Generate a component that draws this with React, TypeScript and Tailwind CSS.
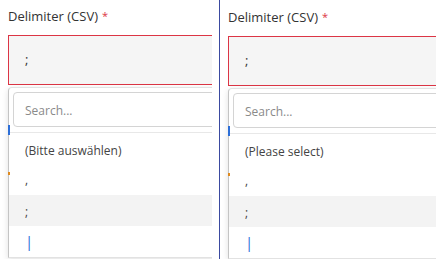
import React from 'react';

interface PanelProps {
  placeholder: string;
  offset?: boolean;
}

function Panel({ placeholder, offset }: PanelProps) {
  return (
    <div className={`relative h-full overflow-hidden pl-2 ${offset ? 'pt-px' : ''}`}>
      <div className="w-[280px]">
        <div className="flex h-[35px] items-center pb-[3px] text-[13px] leading-[18px] text-[#333]">
          <span>Delimiter (CSV)</span>
          <span className="ml-1 text-[11px] text-[#dc3545]">*</span>
        </div>
        <div className="flex h-[50px] items-center border border-[#dc3545] bg-[#f5f5f5] pl-4 text-[13px] text-[#333]">
          ;
        </div>
        <div className="relative mt-[2px] rounded-t-[4px] border border-[#e2e2e2] border-l-[#c4c4c4] bg-white shadow-[0_2px_6px_rgba(0,0,0,0.12)]">
          <span className="absolute -left-px top-[37px] h-[10px] w-[2px] bg-[#2d6fd8]" />
          <span className="absolute -left-px top-[84px] h-[3px] w-[2px] bg-[#e08a1e]" />
          <div className="p-[4px] pb-[5px]">
            <div className="flex h-[35px] items-center rounded-[4px] border border-[#d4d4d4] pl-[11px] pt-[3px] text-[12px] text-[#8a8a8a]">
              Search...
            </div>
          </div>
          <div className="border-t border-[#e8e8e8]">
            <div className="flex h-[31px] items-center pl-4 pt-[4px] text-[12px] text-[#444]">
              {placeholder}
            </div>
            <div className="flex h-[31px] items-center pl-4 text-[12px] text-[#444]">,</div>
            <div className="flex h-[31px] items-center bg-[#f3f3f3] pl-4 pt-[2px] text-[12px] text-[#444]">;</div>
            <div className="flex h-[31px] items-center pl-4 text-[15px] text-[#2d6fd8]">|</div>
          </div>
        </div>
      </div>
    </div>
  );
}

export default function App() {
  return (
    <div
      className="flex h-[259px] w-[441px] overflow-hidden bg-white"
      style={{ fontFamily: '"Open Sans", "Noto Sans", sans-serif' }}
    >
      <div className="w-[212px] shrink-0">
        <Panel placeholder="(Bitte auswählen)" />
      </div>
      <div className="w-[7px] shrink-0" />
      <div className="w-px shrink-0 bg-[#3b4aa0]" />
      <div className="w-[216px] shrink-0">
        <Panel placeholder="(Please select)" offset />
      </div>
    </div>
  );
}
